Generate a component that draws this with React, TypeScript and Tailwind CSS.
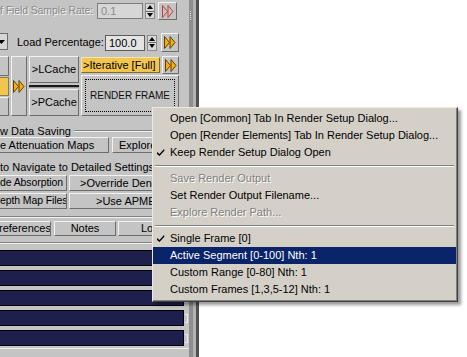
import React from 'react';

const raised =
  'border border-t-[#f2f2f2] border-l-[#f2f2f2] border-r-[#6c6c6c] border-b-[#6c6c6c]';

function Btn({ className = '', children }: { className?: string; children?: React.ReactNode }) {
  return (
    <div className={`flex items-center justify-center shrink-0 whitespace-nowrap overflow-hidden ${raised} ${className}`}>
      {children}
    </div>
  );
}

function FF({ red }: { red?: boolean }) {
  const fill = red ? 'none' : '#ffab00';
  const stroke = red ? '#c43a3a' : '#5c4200';
  return (
    <svg width="12" height="13" viewBox="0 0 12 13">
      <path d="M0.5 0.5 L5.5 6.5 L0.5 12.5 Z" fill={fill} stroke={stroke} strokeWidth="1" />
      <path d="M6 0.5 L11 6.5 L6 12.5 Z" fill={fill} stroke={stroke} strokeWidth="1" />
    </svg>
  );
}

function Spinner({ className = '' }: { className?: string }) {
  return (
    <div className={`w-[10px] h-[16px] shrink-0 flex flex-col bg-[#d8d8d8] border border-[#8a8a8a] ${className}`}>
      <div className="flex-1 flex items-center justify-center">
        <svg width="6" height="4" viewBox="0 0 6 4">
          <path d="M0 4 L3 0 L6 4 Z" fill="#000" />
        </svg>
      </div>
      <div className="h-px bg-[#6c6c6c]" />
      <div className="flex-1 flex items-center justify-center">
        <svg width="6" height="4" viewBox="0 0 6 4">
          <path d="M0 0 L3 4 L6 0 Z" fill="#000" />
        </svg>
      </div>
    </div>
  );
}

function Check() {
  return (
    <svg width="8" height="7" viewBox="0 0 8 7" className="absolute left-[4px] top-[5px]">
      <path d="M0 3 L2.5 5 L7 0 L7.5 1.5 L2.5 7 L0 5 Z" fill="#000" />
    </svg>
  );
}

type Item = { label?: string; check?: boolean; disabled?: boolean; active?: boolean; sep?: boolean };

const menu: Item[] = [
  { label: 'Open [Common] Tab In Render Setup Dialog...' },
  { label: 'Open [Render Elements] Tab In Render Setup Dialog...' },
  { label: 'Keep Render Setup Dialog Open', check: true },
  { sep: true },
  { label: 'Save Render Output', disabled: true },
  { label: 'Set Render Output Filename...' },
  { label: 'Explore Render Path...', disabled: true },
  { sep: true },
  { label: 'Single Frame [0]', check: true },
  { label: 'Active Segment [0-100] Nth: 1', active: true },
  { label: 'Custom Range [0-80] Nth: 1' },
  { label: 'Custom Frames [1,3,5-12] Nth: 1' },
];

function Etched({ className = '' }: { className?: string }) {
  return <div className={`h-[2px] border-t border-t-[#828282] border-b border-b-[#f2f2f2] ${className}`} />;
}

export default function App() {
  return (
    <div className="w-[467px] h-[357px] bg-white relative overflow-hidden font-['Liberation_Sans',Arial,sans-serif] text-[11px] text-black">
      <div className="flex h-full w-[199px]">
        <div className="w-[189px] h-full bg-[#c4c4c4] overflow-hidden flex flex-col shrink-0">
          {/* sample rate row */}
          <div className="h-[22px] flex items-center shrink-0">
            <div className="w-[97px] shrink-0 text-[10.5px] tracking-[-0.1px] text-[#8a8a8a] [text-shadow:1px_1px_0_#f4f4f4] whitespace-nowrap">
              f Field Sample Rate:
            </div>
            <div className="w-[46px] h-[16px] bg-[#d6d6d6] border border-[#7c7c7c] text-[#8a8a8a] pl-[3px] leading-[14px]">
              0.1
            </div>
            <Spinner className="ml-[2px]" />
            <Btn className="ml-[3px] w-[19px] h-[18px]">
              <FF red />
            </Btn>
          </div>

          {/* load percentage row */}
          <div className="mt-[11px] h-[19px] flex items-center shrink-0">
            <div className="-ml-[10px] w-[18px] h-[17px] self-start bg-[#d6d6d6] border border-[#6c6c6c] flex items-center justify-end pr-[2px]">
              <svg width="7" height="4" viewBox="0 0 7 4">
                <path d="M0 0 L3.5 4 L7 0 Z" fill="#000" />
              </svg>
            </div>
            <div className="ml-[9px] w-[88px] whitespace-nowrap">Load Percentage:</div>
            <div className="w-[40px] h-[16px] bg-[#e4e4e4] border border-[#5c5c5c] pl-[3px] leading-[14px]">100.0</div>
            <Spinner className="ml-[2px]" />
            <Btn className="ml-[4px] w-[18px] h-[19px]">
              <FF />
            </Btn>
          </div>

          {/* cache / render row */}
          <div className="mt-[4px] h-[60px] flex shrink-0">
            <div className="-ml-[10px] w-[19px] flex flex-col gap-[1px]">
              <Btn className="h-[20px]" />
              <div className="h-[19px] bg-[#f2c64e] border border-[#8a7a50]" />
              <Btn className="h-[19px]" />
            </div>
            <Btn className="ml-[2px] w-[16px] h-[60px]">
              <FF />
            </Btn>
            <div className="ml-[2px] w-[50px] flex flex-col">
              <Btn className="h-[27px]">&gt;LCache</Btn>
              <div className="h-[6px] flex flex-col justify-center">
                <div className="h-[3px] border-t-2 border-t-[#1a1a1a] bg-[#9a9a9a]" />
              </div>
              <Btn className="h-[27px]">&gt;PCache</Btn>
            </div>
            <div className="ml-[2px] w-[98px] flex flex-col">
              <div className="h-[18px] flex">
                <div className="w-[79px] h-[16px] mt-[1px] bg-[#f2c64e] border border-t-[#f8e6a8] border-l-[#f8e6a8] border-r-[#7c6a30] border-b-[#7c6a30] pl-[1px] leading-[14px] whitespace-nowrap overflow-hidden">
                  &gt;Iterative [Full]
                </div>
                <Btn className="ml-[2px] w-[17px] h-[18px]">
                  <FF />
                </Btn>
              </div>
              <Btn className="mt-[1px] h-[41px] relative">
                <div className="absolute inset-[3px] border border-dotted border-black" />
                <span className="text-[10px] text-[#101010]">RENDER FRAME</span>
              </Btn>
            </div>
          </div>

          {/* data saving group */}
          <div className="mt-[9px] h-[12px] flex items-center shrink-0">
            <span className="whitespace-nowrap leading-[12px]">w Data Saving</span>
            <Etched className="flex-1 ml-[3px] mr-[6px]" />
          </div>
          <div className="h-[16px] flex shrink-0">
            <Btn className="-ml-[10px] w-[119px] h-[16px] justify-start pl-[9px]">e Attenuation Maps</Btn>
            <Btn className="ml-[3px] w-[66px] h-[16px] justify-start pl-[6px]">Explore</Btn>
          </div>

          <div className="mt-[8px] h-[12px] flex items-center shrink-0">
            <span className="whitespace-nowrap leading-[12px]">to Navigate to Detailed Settings</span>
            <Etched className="flex-1 ml-[3px] mr-[6px]" />
          </div>
          <div className="mt-[2px] h-[16px] flex shrink-0">
            <Btn className="-ml-[10px] w-[77px] h-[16px] justify-start pl-[9px] text-[10.5px] tracking-[-0.1px]">de Absorption</Btn>
            <Btn className="ml-[2px] w-[110px] h-[16px] justify-start pl-[10px]">&gt;Override Den</Btn>
          </div>
          <div className="mt-[2px] h-[16px] flex shrink-0">
            <Btn className="-ml-[10px] w-[77px] h-[16px] justify-start pl-[9px] text-[10.5px] tracking-[-0.1px]">epth Map Files</Btn>
            <Btn className="ml-[2px] w-[110px] h-[16px] justify-start pl-[26px]">&gt;Use APME</Btn>
          </div>

          <Etched className="mt-[7px] -ml-[2px] mr-[6px] shrink-0" />

          <div className="mt-[3px] h-[15px] flex shrink-0">
            <Btn className="-ml-[12px] w-[63px] h-[15px] justify-start pl-[10px]">references</Btn>
            <Btn className="ml-[3px] w-[62px] h-[15px]">Notes</Btn>
            <Btn className="ml-[2px] w-[64px] h-[15px] justify-start pl-[22px]">Log</Btn>
          </div>

          <Etched className="mt-[6px] shrink-0" />

          <div className="mt-[6px] flex flex-col gap-[4px] shrink-0">
            {[0, 1, 2, 3, 4].map((i) => (
              <div key={i} className="h-[16px] flex items-center">
                <div className="-ml-[4px] w-[188px] h-[16px] bg-[#1f1f4e] border border-black" />
                <div className="ml-[1px] w-[3px] h-[9px] border-t border-r border-b border-[#ececec]" />
              </div>
            ))}
          </div>
          <div className="mt-[2px] h-px bg-[#ececec] shrink-0" />
        </div>

        <div className="w-[4px] h-full bg-[#8e8e8e] flex flex-col items-center">
          <div className="mt-[11px] w-[2px] h-[9px] border-l border-dotted border-[#e6e6e6]" />
        </div>
        <div className="w-[3px] h-full bg-[#b2b2b2]" />
        <div className="w-[3px] h-full bg-[#505050]" />
      </div>

      {/* context menu */}
      <div className="absolute left-[152px] top-[107px] w-[306px] bg-[#d4d0c8] border border-t-[#ebe9e4] border-l-[#ebe9e4] border-r-[#404040] border-b-[#404040] shadow-[3px_3px_3px_rgba(0,0,0,0.4)]">
        <div className="border-r border-b border-r-[#808080] border-b-[#808080] py-[2px]">
          {menu.map((m, i) =>
            m.sep ? (
              <div key={i} className="h-[9px] flex items-center px-[2px]">
                <div className="flex-1 h-[2px] border-t border-t-[#808080] border-b border-b-white" />
              </div>
            ) : (
              <div
                key={i}
                className={`relative h-[17px] flex items-center pl-[17px] whitespace-nowrap ${
                  m.active ? 'bg-[#0a246a] text-white' : ''
                } ${m.disabled ? 'text-[#808080] [text-shadow:1px_1px_0_#ffffff]' : ''}`}
              >
                {m.check && <Check />}
                {m.label}
              </div>
            )
          )}
        </div>
      </div>
    </div>
  );
}
